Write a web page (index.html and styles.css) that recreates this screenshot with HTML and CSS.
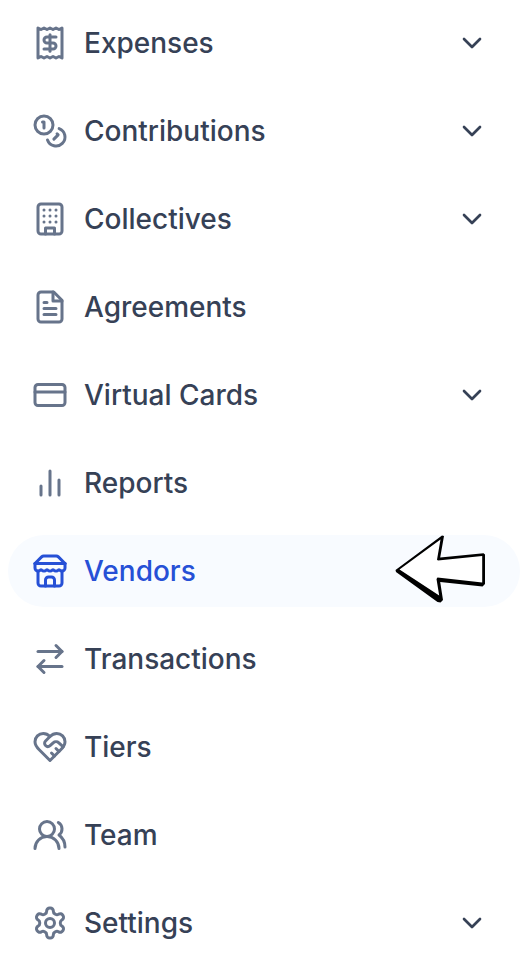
FILE: index.html
```html
<!DOCTYPE html>
<html lang="en">
<head>
<meta charset="utf-8">
<meta name="viewport" content="width=device-width, initial-scale=1">
<title>Dashboard menu</title>
<link rel="stylesheet" href="styles.css">
</head>
<body>
<svg class="sprite" aria-hidden="true">
  <symbol id="chevron" viewBox="0 0 24 24"><path d="m6 9 6 6 6-6"/></symbol>
</svg>
<nav class="menu" aria-label="Dashboard">
  <button class="item" type="button" aria-expanded="false">
    <svg class="icon" viewBox="0 0 24 24" aria-hidden="true"><path d="M4 2v20l2-1 2 1 2-1 2 1 2-1 2 1 2-1 2 1V2l-2 1-2-1-2 1-2-1-2 1-2-1-2 1Z"/><path d="M16 8h-6a2 2 0 1 0 0 4h4a2 2 0 1 1 0 4H8"/><path d="M12 17.5v-11"/></svg>
    <span class="label">Expenses</span>
    <svg class="chevron" aria-hidden="true"><use href="#chevron"/></svg>
  </button>
  <button class="item" type="button" aria-expanded="false">
    <svg class="icon" viewBox="0 0 24 24" aria-hidden="true"><circle cx="8" cy="8" r="6"/><path d="M18.09 10.37A6 6 0 1 1 10.34 18"/><path d="M7 6h1v4"/><path d="m16.71 13.88.7.71-2.82 2.82"/></svg>
    <span class="label">Contributions</span>
    <svg class="chevron" aria-hidden="true"><use href="#chevron"/></svg>
  </button>
  <button class="item" type="button" aria-expanded="false">
    <svg class="icon" viewBox="0 0 24 24" aria-hidden="true"><rect width="16" height="20" x="4" y="2" rx="2"/><path d="M9 22v-4h6v4"/><path d="M8 6h.01M12 6h.01M16 6h.01M8 10h.01M12 10h.01M16 10h.01M8 14h.01M12 14h.01M16 14h.01"/></svg>
    <span class="label">Collectives</span>
    <svg class="chevron" aria-hidden="true"><use href="#chevron"/></svg>
  </button>
  <a class="item" href="#agreements">
    <svg class="icon" viewBox="0 0 24 24" aria-hidden="true"><path d="M14.5 2H6a2 2 0 0 0-2 2v16a2 2 0 0 0 2 2h12a2 2 0 0 0 2-2V7.500L14.500 2z"/><path d="M14 2v6h6"/><path d="M10 9H8M16 13H8M16 17H8"/></svg>
    <span class="label">Agreements</span>
  </a>
  <button class="item" type="button" aria-expanded="false">
    <svg class="icon" viewBox="0 0 24 24" aria-hidden="true"><rect width="20" height="14" x="2" y="5" rx="2"/><path d="M2 10h20"/></svg>
    <span class="label">Virtual Cards</span>
    <svg class="chevron" aria-hidden="true"><use href="#chevron"/></svg>
  </button>
  <a class="item" href="#reports">
    <svg class="icon" viewBox="0 0 24 24" aria-hidden="true"><path d="M18 20V10M12 20V4M6 20v-6"/></svg>
    <span class="label">Reports</span>
  </a>
  <a class="item active" href="#vendors" aria-current="page">
    <svg class="icon" viewBox="0 0 24 24" aria-hidden="true"><path d="m2 7 4.410-4.410A2 2 0 0 1 7.830 2h8.340a2 2 0 0 1 1.420.590L22 7"/><path d="M4 12v8a2 2 0 0 0 2 2h12a2 2 0 0 0 2-2v-8"/><path d="M15 22v-4a2 2 0 0 0-2-2h-2a2 2 0 0 0-2 2v4"/><path d="M2 7h20"/><path d="M22 7v3a2 2 0 0 1-2 2a2.700 2.700 0 0 1-1.590-.630.700.700 0 0 0-.820 0A2.700 2.700 0 0 1 16 12a2.700 2.700 0 0 1-1.590-.630.700.700 0 0 0-.820 0A2.700 2.700 0 0 1 12 12a2.700 2.700 0 0 1-1.590-.630.700.700 0 0 0-.820 0A2.700 2.700 0 0 1 8 12a2.700 2.700 0 0 1-1.590-.630.700.700 0 0 0-.820 0A2.700 2.700 0 0 1 4 12a2 2 0 0 1-2-2V7"/></svg>
    <span class="label">Vendors</span>
    <svg class="pointer" viewBox="0 0 92 70" aria-hidden="true"><path class="pointer-edge" d="M.5 37 47 2.500 49 3 45.200 24.500 88.500 20.200 90 21.500V51l-2.500 2.500L45.200 49 48 67l-2.500 2.500-3-.5L1 39Z"/><path class="pointer-fill" d="M4.500 36.500 45.500 6.500 42 26.800 43 27.500 87.200 23V49.500L42.500 44.500 41.500 46 44.200 62.500Z"/></svg>
  </a>
  <a class="item" href="#transactions">
    <svg class="icon" viewBox="0 0 24 24" aria-hidden="true"><path d="m16 3 4 4-4 4"/><path d="M20 7H4"/><path d="m8 21-4-4 4-4"/><path d="M4 17h16"/></svg>
    <span class="label">Transactions</span>
  </a>
  <a class="item" href="#tiers">
    <svg class="icon" viewBox="0 0 24 24" aria-hidden="true"><path d="M19 14c1.490-1.460 3-3.210 3-5.500A5.500 5.500 0 0 0 16.500 3c-1.760 0-3 .5-4.500 2-1.500-1.500-2.740-2-4.500-2A5.500 5.500 0 0 0 2 8.500c0 2.300 1.500 4.050 3 5.500l7 7Z"/><path d="M12 5 9.040 7.960a2.170 2.170 0 0 0 0 3.080c.820.820 2.130.850 3 .070l2.070-1.900a2.820 2.820 0 0 1 3.790 0l2.960 2.660"/><path d="m18 15-2-2M15 18l-2-2"/></svg>
    <span class="label">Tiers</span>
  </a>
  <a class="item" href="#team">
    <svg class="icon" viewBox="0 0 24 24" aria-hidden="true"><path d="M18 21a8 8 0 0 0-16 0"/><circle cx="10" cy="8" r="5"/><path d="M22 20c0-3.370-2-6.500-4-8a5 5 0 0 0-.450-8.300"/></svg>
    <span class="label">Team</span>
  </a>
  <button class="item" type="button" aria-expanded="false">
    <svg class="icon" viewBox="0 0 24 24" aria-hidden="true"><path d="M12.22 2h-.44a2 2 0 0 0-2 2v.18a2 2 0 0 1-1 1.73l-.43.25a2 2 0 0 1-2 0l-.15-.08a2 2 0 0 0-2.73.73l-.22.38a2 2 0 0 0 .73 2.73l.15.1a2 2 0 0 1 1 1.72v.51a2 2 0 0 1-1 1.74l-.15.09a2 2 0 0 0-.73 2.73l.22.38a2 2 0 0 0 2.73.73l.15-.08a2 2 0 0 1 2 0l.43.25a2 2 0 0 1 1 1.73V20a2 2 0 0 0 2 2h.44a2 2 0 0 0 2-2v-.18a2 2 0 0 1 1-1.73l.43-.25a2 2 0 0 1 2 0l.15.08a2 2 0 0 0 2.73-.73l.22-.39a2 2 0 0 0-.73-2.73l-.15-.08a2 2 0 0 1-1-1.74v-.5a2 2 0 0 1 1-1.74l.15-.09a2 2 0 0 0 .73-2.73l-.22-.38a2 2 0 0 0-2.73-.73l-.15.08a2 2 0 0 1-2 0l-.43-.25a2 2 0 0 1-1-1.73V4a2 2 0 0 0-2-2z"/><circle cx="12" cy="12" r="3"/></svg>
    <span class="label">Settings</span>
    <svg class="chevron" aria-hidden="true"><use href="#chevron"/></svg>
  </button>
</nav>
</body>
</html>
```
FILE: styles.css
```css
* {
  box-sizing: border-box;
}

body {
  margin: 0;
  background: #fff;
  font-family: Inter, "Liberation Sans", sans-serif;
}

.sprite {
  position: absolute;
  width: 0;
  height: 0;
}

.menu {
  display: flex;
  flex-direction: column;
  gap: 16px;
  padding: 7px 4px 0 8px;
}

.item {
  position: relative;
  display: flex;
  align-items: center;
  gap: 16px;
  width: 100%;
  padding: 16px 32px 16px 24px;
  border: 0;
  border-radius: 36px;
  background: transparent;
  color: #364156;
  font: inherit;
  font-size: 28px;
  font-weight: 500;
  line-height: 40px;
  text-align: left;
  text-decoration: none;
  cursor: pointer;
}

.label {
  flex: 1;
}

.icon,
.chevron {
  flex: none;
  fill: none;
  stroke: currentColor;
  stroke-width: 2;
  stroke-linecap: round;
  stroke-linejoin: round;
}

.icon {
  width: 36px;
  height: 36px;
  color: #67748b;
}

.chevron {
  width: 32px;
  height: 32px;
}

.active {
  background: #f8fbff;
}

.active,
.active .icon {
  color: #2650d6;
}

.pointer {
  position: absolute;
  top: -2px;
  right: 33px;
  width: 92px;
  height: 70px;
}

.pointer-edge {
  fill: #000;
}

.pointer-fill {
  fill: #fff;
}
```
